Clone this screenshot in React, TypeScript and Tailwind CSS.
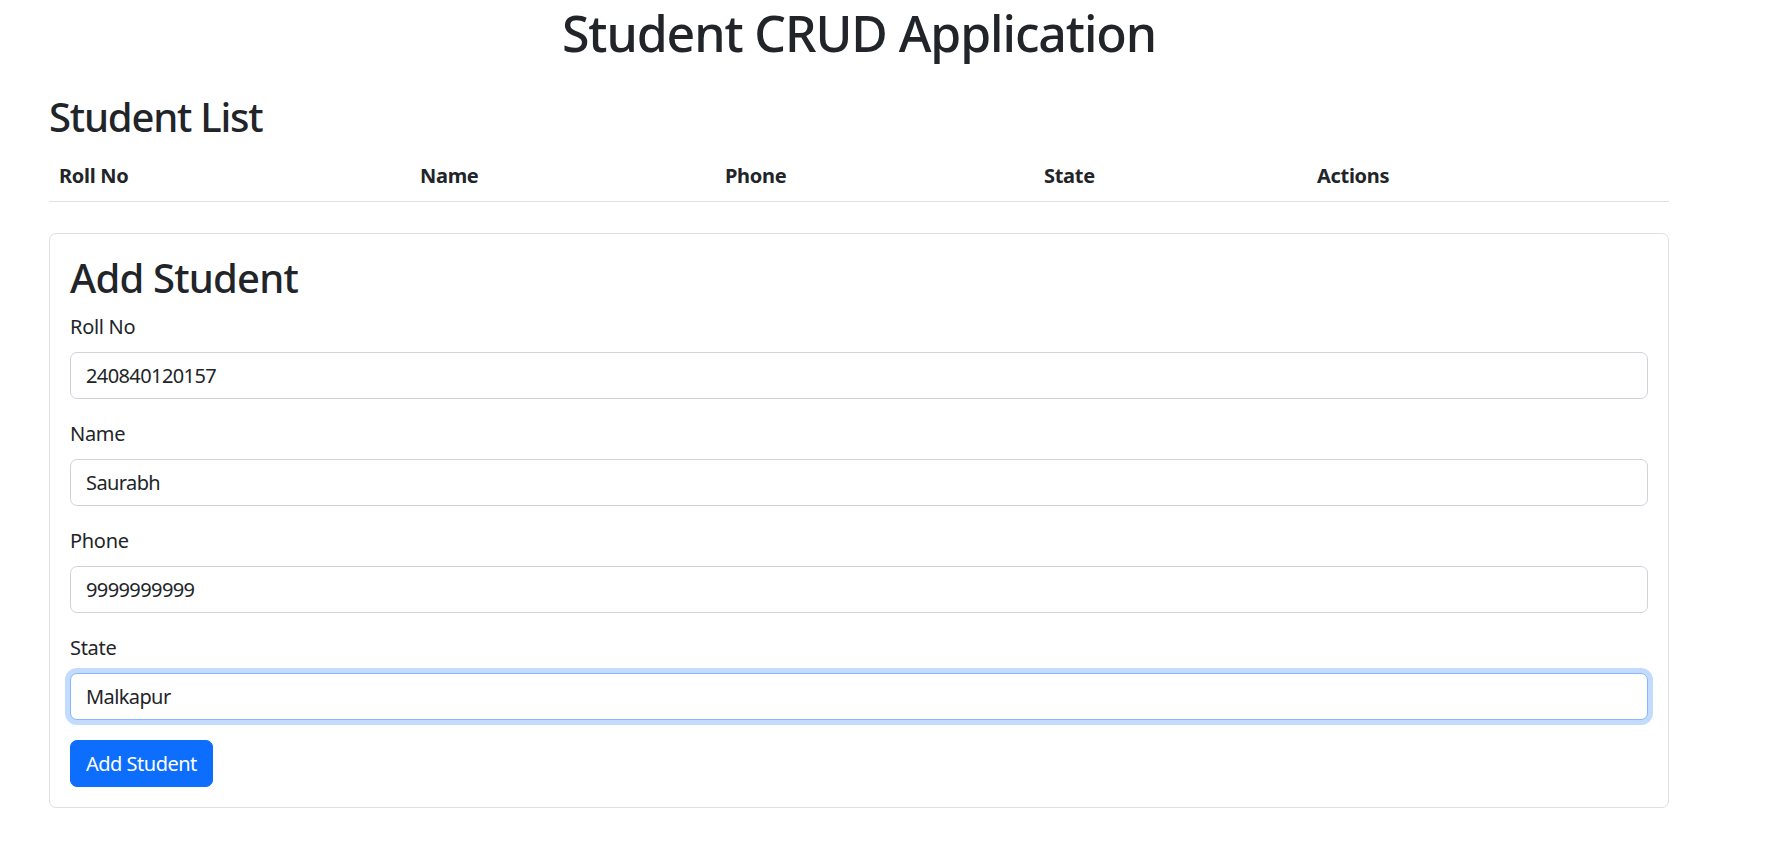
import React from "react";

const fields = [
  { label: "Roll No", value: "240840120157", focused: false },
  { label: "Name", value: "Saurabh", focused: false },
  { label: "Phone", value: "9999999999", focused: false },
  { label: "State", value: "Malkapur", focused: true },
];

export default function App() {
  return (
    <div className="min-h-[862px] bg-white text-[#212529] text-[20px] leading-[1.5] font-['Noto_Sans',sans-serif]">
      <div className="ml-[49px] w-[1620px] pt-[3px]">
        <h1 className="text-center text-[50px] leading-[1.2] font-medium tracking-[-1.1px]">
          Student CRUD Application
        </h1>
        <h2 className="mt-[30px] mb-[10px] text-[40px] leading-[1.2] font-medium tracking-[-1.2px]">
          Student List
        </h2>
        <table className="w-full table-fixed border-collapse">
          <colgroup>
            <col className="w-[361px]" />
            <col className="w-[305px]" />
            <col className="w-[319px]" />
            <col className="w-[273px]" />
            <col />
          </colgroup>
          <thead>
            <tr className="border-b border-[#dee2e6]">
              <th className="px-[10px] py-[10px] text-left font-bold tracking-[-0.3px]">Roll No</th>
              <th className="px-[10px] py-[10px] text-left font-bold tracking-[-0.3px]">Name</th>
              <th className="px-[10px] py-[10px] text-left font-bold tracking-[-0.3px]">Phone</th>
              <th className="px-[10px] py-[10px] text-left font-bold tracking-[-0.3px]">State</th>
              <th className="px-[10px] py-[10px] text-left font-bold tracking-[-0.3px]">Actions</th>
            </tr>
          </thead>
          <tbody></tbody>
        </table>

        <div className="mt-[31px] rounded-[7px] border border-[#dfdfdf] p-[20px]">
          <h2 className="mb-[10px] text-[40px] leading-[1.2] font-medium tracking-[-0.8px]">Add Student</h2>
          <form onSubmit={(e) => e.preventDefault()}>
            {fields.map((f) => (
              <div key={f.label} className="mb-[20px]">
                <label className="mb-[10px] block tracking-[-0.3px]">{f.label}</label>
                <input
                  type="text"
                  defaultValue={f.value}
                  className={
                    f.focused
                      ? "block h-[47px] w-full rounded-[7px] border border-[#86b7fe] bg-white px-[15px] text-[20px] tracking-[-0.6px] text-[#212529] outline-none shadow-[0_0_0_5px_rgba(13,110,253,0.25)]"
                      : "block h-[47px] w-full rounded-[7px] border border-[#ced4da] bg-white px-[15px] text-[20px] tracking-[-0.6px] text-[#212529] outline-none"
                  }
                />
              </div>
            ))}
            <button
              type="submit"
              className="h-[47px] rounded-[7px] border border-[#0d6efd] bg-[#0d6efd] px-[15px] text-[20px] leading-[1.5] tracking-[-0.5px] text-white"
            >
              Add Student
            </button>
          </form>
        </div>
      </div>
    </div>
  );
}
